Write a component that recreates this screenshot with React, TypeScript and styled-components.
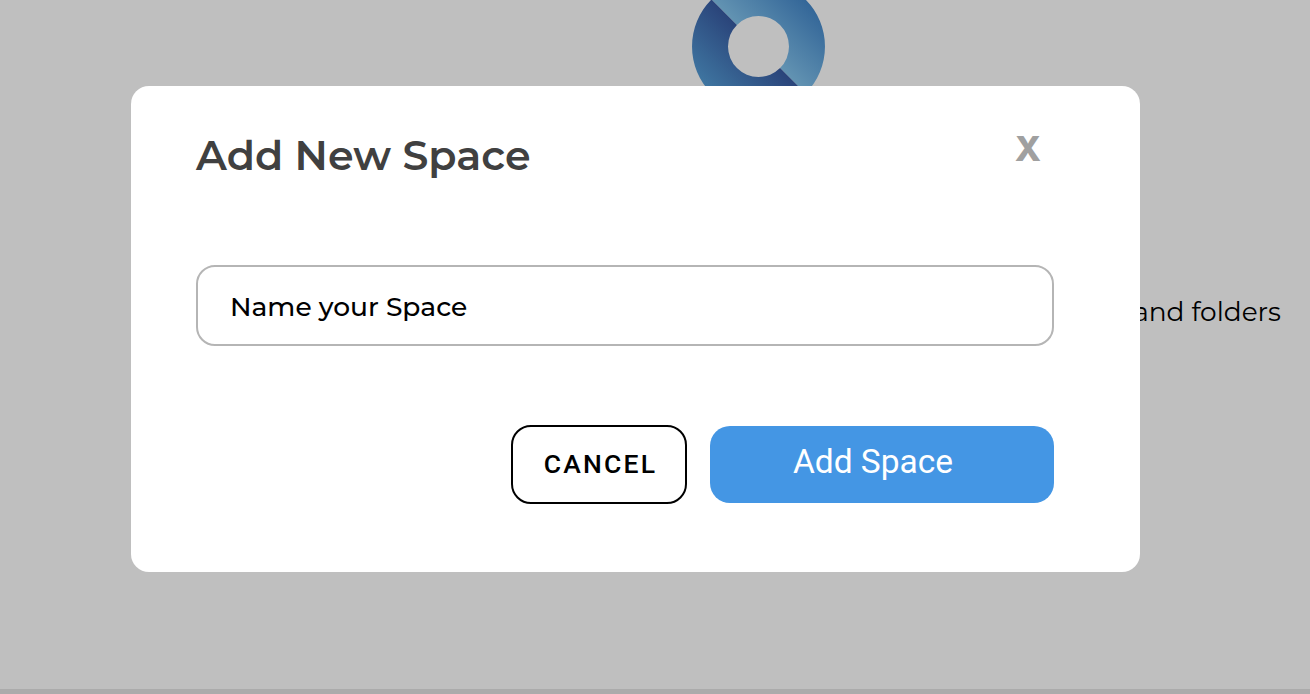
import { useCallback, useState } from 'react'
import styled, { createGlobalStyle } from 'styled-components'

const Color = {
	Backdrop: '#bfbfbf',
	Divider: '#ababab',
	White: '#ffffff',
	Title: '#404040',
	Close: '#a0a0a0',
	InputBorder: '#b5b5b5',
	Primary: '#4496e4',
	Black: '#000000'
}

const Logo = () => (
	<LogoSvg width='133' height='133' viewBox='0 0 133 133'>
		<defs>
			<linearGradient
				id='logo-upper'
				gradientUnits='userSpaceOnUse'
				x1='66.5'
				y1='66.5'
				x2='113.5'
				y2='19.5'
			>
				<stop offset='0' stopColor='#6293b2' />
				<stop offset='1' stopColor='#336698' />
			</linearGradient>
			<linearGradient
				id='logo-lower'
				gradientUnits='userSpaceOnUse'
				x1='66.5'
				y1='66.5'
				x2='19.5'
				y2='113.5'
			>
				<stop offset='0' stopColor='#2a447a' />
				<stop offset='1' stopColor='#3f76a1' />
			</linearGradient>
		</defs>
		<path
			fill='url(#logo-upper)'
			d='M19.477 19.477A66.5 66.5 0 0 1 113.523 113.523L88.067 88.067A30.5 30.5 0 0 0 44.933 44.933Z'
		/>
		<path
			fill='url(#logo-lower)'
			d='M19.477 19.477A66.5 66.5 0 0 0 113.523 113.523L88.067 88.067A30.5 30.5 0 0 1 44.933 44.933Z'
		/>
	</LogoSvg>
)

const App = () => {
	const [open, setOpen] = useState(true)
	const [name, setName] = useState('')

	const handleClose = useCallback(() => {
		setOpen(false)
	}, [])

	return (
		<Page>
			<GlobalStyle />
			<Logo />
			<Hint>and folders</Hint>
			<BottomLine />
			{open && (
				<Overlay>
					<Modal role='dialog' aria-labelledby='modal-title'>
						<ModalHeader>
							<Title id='modal-title'>Add New Space</Title>
							<CloseButton onClick={handleClose}>X</CloseButton>
						</ModalHeader>
						<NameInput
							value={name}
							placeholder='Name your Space'
							onChange={e => setName(e.target.value)}
						/>
						<Actions>
							<CancelButton onClick={handleClose}>CANCEL</CancelButton>
							<AddButton onClick={handleClose}>Add Space</AddButton>
						</Actions>
					</Modal>
				</Overlay>
			)}
		</Page>
	)
}

export default App

const GlobalStyle = createGlobalStyle`
	* {
		box-sizing: border-box;
	}

	body {
		margin: 0;
		font-family: Montserrat, Inter, sans-serif;
	}
`

const Page = styled.div`
	position: relative;
	display: flex;
	flex-direction: column;
	height: 694px;
	overflow: hidden;
	background: ${Color.Backdrop};
`

const LogoSvg = styled.svg`
	flex-shrink: 0;
	margin: -20px 0 0 692px;
`

const Hint = styled.p`
	align-self: flex-end;
	margin: 179px 29px 0 0;
	font-size: 26.4px;
	font-weight: 400;
	line-height: 40px;
	white-space: nowrap;
	color: ${Color.Black};
`

const BottomLine = styled.div`
	height: 5px;
	margin-top: auto;
	background: ${Color.Divider};
`

const Overlay = styled.div`
	position: absolute;
	inset: 0;
	padding: 86px 170px 122px 131px;
`

const Modal = styled.div`
	display: flex;
	flex-direction: column;
	height: 486px;
	padding: 42px 86px 68px 65px;
	border-radius: 18px;
	background: ${Color.White};
`

const ModalHeader = styled.div`
	display: flex;
	align-items: flex-start;
	justify-content: space-between;
	height: 137px;
`

const Title = styled.h1`
	margin: 0;
	font-size: 41.2px;
	font-weight: 600;
	line-height: 54px;
	color: ${Color.Title};
`

const CloseButton = styled.button`
	margin-right: 13px;
	padding: 0;
	border: 0;
	background: none;
	font-family: Inter, sans-serif;
	font-size: 34.6px;
	font-weight: 800;
	line-height: 40px;
	color: ${Color.Close};
	cursor: pointer;
`

const NameInput = styled.input`
	width: 858px;
	height: 81px;
	flex-shrink: 0;
	padding: 2px 32px 0;
	border: 2px solid ${Color.InputBorder};
	border-radius: 19px;
	outline: none;
	font-family: Montserrat, Inter, sans-serif;
	font-size: 26.5px;
	font-weight: 500;
	color: ${Color.Black};

	&::placeholder {
		color: ${Color.Black};
		opacity: 1;
	}
`

const Actions = styled.div`
	display: flex;
	justify-content: flex-end;
	gap: 23px;
	margin-top: 79px;
`

const Button = styled.button`
	font-family: Roboto, sans-serif;
	border-radius: 20px;
	cursor: pointer;
`

const CancelButton = styled(Button)`
	width: 176px;
	height: 79px;
	padding: 0 0 2px 3px;
	border: 2px solid ${Color.Black};
	background: ${Color.White};
	font-size: 26.5px;
	font-weight: 500;
	letter-spacing: 2.2px;
	color: ${Color.Black};
`

const AddButton = styled(Button)`
	width: 344px;
	height: 77px;
	margin-top: 1px;
	padding: 0 18px 6px 0;
	border: 0;
	background: ${Color.Primary};
	font-size: 33.5px;
	color: ${Color.White};
`
